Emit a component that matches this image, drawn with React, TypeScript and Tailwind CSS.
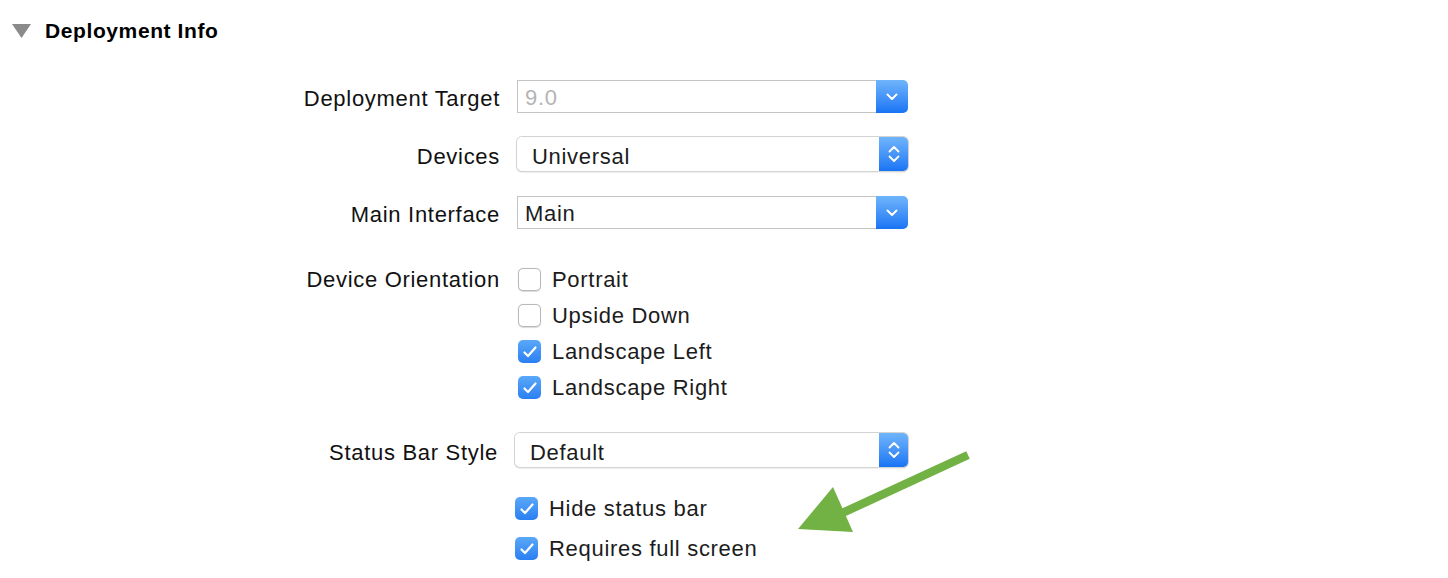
import React from "react";

function ChevronDown() {
  return (
    <svg width="14" height="10" viewBox="0 0 14 10" fill="none">
      <path d="M2.5 2.5 L7 7 L11.5 2.5" stroke="white" strokeWidth="2" strokeLinecap="round" strokeLinejoin="round" />
    </svg>
  );
}

function ChevronUpDown() {
  return (
    <svg width="14" height="22" viewBox="0 0 14 22" fill="none">
      <path d="M2.5 8.5 L7 4 L11.5 8.5" stroke="white" strokeWidth="1.8" strokeLinecap="round" strokeLinejoin="round" />
      <path d="M2.5 13.5 L7 18 L11.5 13.5" stroke="white" strokeWidth="1.8" strokeLinecap="round" strokeLinejoin="round" />
    </svg>
  );
}

function Combo({ value, disabled }: { value: string; disabled?: boolean }) {
  return (
    <div className="flex h-[33px] w-[391px]">
      <div className="flex flex-1 items-end border border-r-0 border-[#c4c4c4] bg-white pb-[2px] pl-[7px]">
        <span className={disabled ? "text-[#b4b4b4]" : "text-[#1c1c1c]"}>{value}</span>
      </div>
      <div className="flex w-[32px] items-center justify-center rounded-r-[5px] bg-gradient-to-b from-[#6fb4fb] to-[#1874f4]">
        <ChevronDown />
      </div>
    </div>
  );
}

function Popup({ value, w }: { value: string; w: string }) {
  return (
    <div className={`flex h-[34px] ${w} rounded-[5px] shadow-[0_1px_1.5px_rgba(0,0,0,0.3)] ring-1 ring-[#d3d3d3]`}>
      <div className="flex flex-1 items-end rounded-l-[5px] bg-white pb-[2px] pl-[15px]">
        <span className="text-[#1c1c1c]">{value}</span>
      </div>
      <div className="flex w-[29px] items-center justify-center rounded-r-[5px] bg-gradient-to-b from-[#6fb4fb] to-[#1874f4]">
        <ChevronUpDown />
      </div>
    </div>
  );
}

function Check({ checked, label }: { checked: boolean; label: string }) {
  return (
    <div className="flex h-[23px] items-center gap-[11px]">
      {checked ? (
        <div className="flex h-[23px] w-[23px] items-center justify-center rounded-[5px] bg-gradient-to-b from-[#5aa8f8] to-[#2a7ff2]">
          <svg width="16" height="14" viewBox="0 0 16 14" fill="none">
            <path d="M2.5 7.5 L6 11 L13.5 2.5" stroke="white" strokeWidth="2.2" strokeLinecap="round" strokeLinejoin="round" />
          </svg>
        </div>
      ) : (
        <div className="h-[23px] w-[23px] rounded-[5px] border border-[#b9b9b9] bg-white shadow-[0_0.5px_1px_rgba(0,0,0,0.15)]" />
      )}
      <span className="text-[#1c1c1c]">{label}</span>
    </div>
  );
}

function Label({ children }: { children: React.ReactNode }) {
  return <div className="flex items-end justify-end pb-[2px] text-[#111]">{children}</div>;
}

export default function App() {
  return (
    <div className="relative h-[578px] w-[1448px] overflow-hidden bg-white font-['Liberation_Sans',Arial,sans-serif] text-[22px] leading-[24px] tracking-[0.7px] antialiased">
      <div className="flex items-center pl-[12px] pt-[19px]">
        <svg width="19" height="15" viewBox="0 0 19 15">
          <polygon points="0,0 19,0 9.5,14" fill="#8b8b8b" />
        </svg>
        <span className="ml-[14px] text-[21px] font-bold tracking-[0.6px] text-black">Deployment Info</span>
      </div>

      <div className="mt-[37px] grid grid-cols-[500px_391px] gap-x-[17px]">
        <Label>Deployment Target</Label>
        <Combo value="9.0" disabled />

        <div className="col-span-2 h-[24px]" />
        <Label>Devices</Label>
        <Popup value="Universal" w="w-[391px]" />

        <div className="col-span-2 h-[25px]" />
        <Label>Main Interface</Label>
        <Combo value="Main" />

        <div className="col-span-2 h-[39px]" />
        <div className="flex h-[23px] items-center justify-end text-[#111]">
          <span>Device Orientation</span>
        </div>
        <div className="flex flex-col gap-[13px] pl-[1px]">
          <Check checked={false} label="Portrait" />
          <Check checked={false} label="Upside Down" />
          <Check checked label="Landscape Left" />
          <Check checked label="Landscape Right" />
        </div>
      </div>

      <div className="mt-[34px] grid grid-cols-[498px_393px] gap-x-[17px]">
        <Label>Status Bar Style</Label>
        <Popup value="Default" w="w-[393px]" />

        <div className="col-span-2 h-[30px]" />
        <div />
        <div className="flex flex-col gap-[17px]">
          <Check checked label="Hide status bar" />
          <Check checked label="Requires full screen" />
        </div>
      </div>

      <svg className="pointer-events-none absolute left-0 top-0" width="1448" height="578" viewBox="0 0 1448 578">
        <line x1="968" y1="455" x2="838" y2="515" stroke="#72b244" strokeWidth="8.5" />
        <polygon points="798,529 833,487 853,532" fill="#72b244" />
      </svg>
    </div>
  );
}
